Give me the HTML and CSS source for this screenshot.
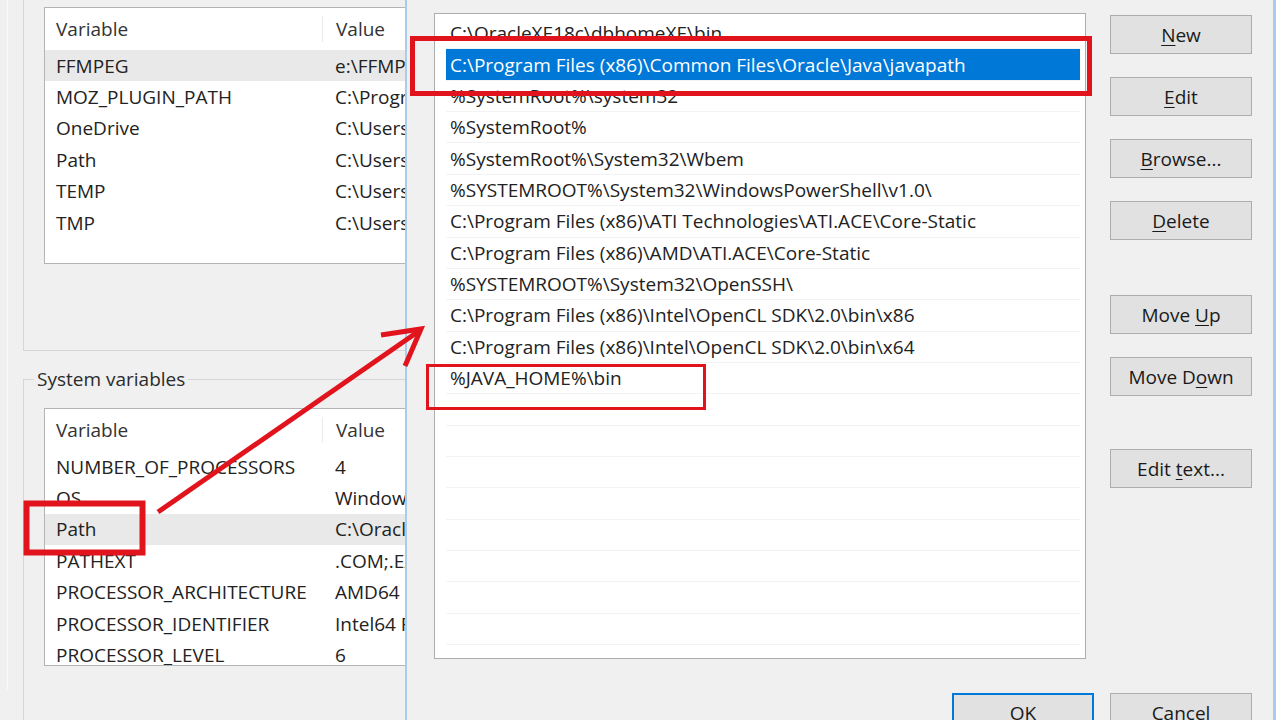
FILE: index.html
```html
<!DOCTYPE html>
<html lang="en">
<head>
    <meta charset="UTF-8">
    <title>Edit environment variable</title>
    <link rel="stylesheet" href="styles.css">
</head>
<body>

<div class="screen">

    <!-- Environment Variables dialog (behind) -->
    <div class="back-window">
        <div class="tab-page">
            <fieldset class="group user-group">
                <div class="var-list user-list">
                    <div class="list-head"><span class="col-name">Variable</span><span class="col-value">Value</span></div>
                    <div class="list-row hot"><span class="col-name">FFMPEG</span><span class="col-value">e:\FFMPEG\bin</span></div>
                    <div class="list-row"><span class="col-name">MOZ_PLUGIN_PATH</span><span class="col-value">C:\Program Files</span></div>
                    <div class="list-row"><span class="col-name">OneDrive</span><span class="col-value">C:\Users\</span></div>
                    <div class="list-row"><span class="col-name">Path</span><span class="col-value">C:\Users\</span></div>
                    <div class="list-row"><span class="col-name">TEMP</span><span class="col-value">C:\Users\</span></div>
                    <div class="list-row"><span class="col-name">TMP</span><span class="col-value">C:\Users\</span></div>
                </div>
            </fieldset>

            <fieldset class="group system-group">
                <legend class="group-title">System variables</legend>
                <div class="var-list system-list">
                    <div class="list-head"><span class="col-name">Variable</span><span class="col-value">Value</span></div>
                    <div class="list-row"><span class="col-name">NUMBER_OF_PROCESSORS</span><span class="col-value">4</span></div>
                    <div class="list-row"><span class="col-name">OS</span><span class="col-value">Windows_NT</span></div>
                    <div class="list-row hot"><span class="col-name">Path</span><span class="col-value">C:\Oracle</span></div>
                    <div class="list-row"><span class="col-name">PATHEXT</span><span class="col-value">.COM;.EXE</span></div>
                    <div class="list-row"><span class="col-name">PROCESSOR_ARCHITECTURE</span><span class="col-value">AMD64</span></div>
                    <div class="list-row"><span class="col-name">PROCESSOR_IDENTIFIER</span><span class="col-value">Intel64 Family</span></div>
                    <div class="list-row"><span class="col-name">PROCESSOR_LEVEL</span><span class="col-value">6</span></div>
                </div>
            </fieldset>
        </div>
    </div>

    <!-- Edit environment variable dialog (front) -->
    <div class="front-window">
        <div class="path-list">
            <div class="path-item">C:\OracleXE18c\dbhomeXE\bin</div>
            <div class="path-item selected">C:\Program Files (x86)\Common Files\Oracle\Java\javapath</div>
            <div class="path-item">%SystemRoot%\system32</div>
            <div class="path-item">%SystemRoot%</div>
            <div class="path-item">%SystemRoot%\System32\Wbem</div>
            <div class="path-item">%SYSTEMROOT%\System32\WindowsPowerShell\v1.0\</div>
            <div class="path-item">C:\Program Files (x86)\ATI Technologies\ATI.ACE\Core-Static</div>
            <div class="path-item">C:\Program Files (x86)\AMD\ATI.ACE\Core-Static</div>
            <div class="path-item">%SYSTEMROOT%\System32\OpenSSH\</div>
            <div class="path-item">C:\Program Files (x86)\Intel\OpenCL SDK\2.0\bin\x86</div>
            <div class="path-item">C:\Program Files (x86)\Intel\OpenCL SDK\2.0\bin\x64</div>
            <div class="path-item">%JAVA_HOME%\bin</div>
            <div class="path-item"></div>
            <div class="path-item"></div>
            <div class="path-item"></div>
            <div class="path-item"></div>
            <div class="path-item"></div>
            <div class="path-item"></div>
            <div class="path-item"></div>
            <div class="path-item"></div>
            <div class="path-item"></div>
        </div>

        <div class="button-column">
            <button class="btn"><u>N</u>ew</button>
            <button class="btn"><u>E</u>dit</button>
            <button class="btn"><u>B</u>rowse...</button>
            <button class="btn"><u>D</u>elete</button>
            <button class="btn move-group">Move <u>U</u>p</button>
            <button class="btn">Move D<u>o</u>wn</button>
            <button class="btn text-group">Edit <u>t</u>ext...</button>
        </div>

        <div class="dialog-footer">
            <button class="btn btn-default">OK</button>
            <button class="btn">Cancel</button>
        </div>
    </div>

    <!-- red markup drawn over the screenshot -->
    <svg class="annotations" width="1279" height="720" viewBox="0 0 1279 720">
        <g fill="none" stroke="#e1141d" stroke-linejoin="miter">
            <rect x="412.5" y="38.5" width="677" height="55" stroke-width="5"/>
            <rect x="427.5" y="365.5" width="277" height="43" stroke-width="3"/>
            <rect x="26.5" y="503.5" width="116" height="49" stroke-width="6"/>
            <line x1="158" y1="512" x2="419" y2="331" stroke-width="5"/>
            <polyline points="381,335 421,329 405,366" stroke-width="5"/>
        </g>
    </svg>

</div>

</body>
</html>
```

FILE: styles.css
```css
/* General styles */
body {
    margin: 0;
    font-family: "Open Sans", "Noto Sans", sans-serif;
    font-size: 19px;
    color: #222;
    background-color: #fff;
}

.screen {
    position: relative;
    display: flex;
    width: 1279px;
    height: 720px;
    overflow: hidden;
    background-color: #fff;
}

/* Back dialog */
.back-window {
    flex: none;
    width: 405px;
    height: 720px;
    overflow: hidden;
    background-color: #f0f0f0;
    padding-left: 7px;
    box-sizing: border-box;
}

.tab-page {
    width: 700px;
    height: 100%;
    border-left: 1px solid #fafafa;
    padding-left: 15px;
}

.group {
    width: 640px;
    margin: 0;
    padding: 0 0 0 20px;
    border: 1px solid #d6d6d6;
    box-sizing: border-box;
}

.user-group {
    margin-top: -30px;
    height: 381px;
    padding-top: 36px;
}

.system-group {
    margin-top: 16px;
    height: 420px;
    padding-top: 17px;
}

.group-title {
    margin-left: -10px;
    padding: 0 3px;
    line-height: 24px;
    color: #2b2b2b;
}

.var-list {
    width: 560px;
    background-color: #fff;
    border: 1px solid #b4b4b4;
    box-sizing: border-box;
    overflow: hidden;
}

.user-list {
    height: 257px;
}

.system-list {
    height: 258px;
}

.list-head {
    display: flex;
    align-items: center;
    height: 42px;
    padding-left: 11px;
    color: #333;
}

.list-head .col-name {
    width: 266px;
    margin-right: 13px;
    border-right: 1px solid #ececec;
}

.list-row {
    display: flex;
    align-items: center;
    height: 31.4px;
    padding-left: 11px;
    white-space: nowrap;
}

.list-row.hot {
    background-color: #e9e9e9;
}

.col-name {
    flex: none;
    width: 279px;
}

/* Front dialog */
.front-window {
    flex: none;
    width: 871px;
    height: 720px;
    box-sizing: border-box;
    border-left: 2px solid #a9cbec;
    border-right: 3px solid #a9cbec;
    background-color: #f0f0f0;
    padding: 13px 0 0 27px;
    display: grid;
    grid-template-columns: 652px 142px;
    grid-template-rows: 646px auto;
    column-gap: 24px;
    row-gap: 34px;
    align-content: start;
}

.path-list {
    height: 646px;
    box-sizing: border-box;
    background-color: #fff;
    border: 1px solid #adadad;
    padding: 4px 5px 0 11px;
    overflow: hidden;
}

.path-item {
    display: flex;
    align-items: center;
    height: 31.36px;
    box-sizing: border-box;
    padding-left: 4px;
    border-bottom: 1px solid #f3f3f3;
    white-space: nowrap;
}

.path-item.selected {
    background-color: #0078d7;
    color: #fff;
}

.button-column {
    display: flex;
    flex-direction: column;
    padding-top: 2px;
}

.btn {
    width: 142px;
    height: 39px;
    box-sizing: border-box;
    padding: 0;
    border: 1px solid #adadad;
    background-color: #e1e1e1;
    font-family: inherit;
    font-size: 19px;
    color: #1a1a1a;
}

.btn u {
    text-underline-offset: 3px;
}

.button-column .btn + .btn {
    margin-top: 23px;
}

.button-column .btn.move-group {
    margin-top: 55px;
}

.button-column .btn.text-group {
    margin-top: 53px;
}

.dialog-footer {
    grid-column: 1 / -1;
    display: flex;
    justify-content: flex-end;
    gap: 16px;
}

.btn-default {
    border: 2px solid #0078d7;
}

/* Red markup */
.annotations {
    position: absolute;
    top: 0;
    left: 0;
    pointer-events: none;
}
```
